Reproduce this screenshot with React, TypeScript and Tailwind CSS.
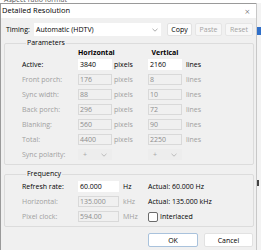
import React from 'react';

const paramRows = [
    { label: 'Active:', h: '3840', v: '2160', enabled: true },
    { label: 'Front porch:', h: '176', v: '8', enabled: false },
    { label: 'Sync width:', h: '88', v: '10', enabled: false },
    { label: 'Back porch:', h: '296', v: '72', enabled: false },
    { label: 'Blanking:', h: '560', v: '90', enabled: false },
    { label: 'Total:', h: '4400', v: '2250', enabled: false },
];

function Chevron({ className = '' }: { className?: string }) {
    return (
        <svg width="6" height="4" viewBox="0 0 6 4" className={className}>
            <path d="M0.5 0.8 L3 3.2 L5.5 0.8" fill="none" stroke="currentColor" strokeWidth="0.7" />
        </svg>
    );
}

function Field({ value, enabled, width }: { value: string; enabled: boolean; width: string }) {
    return (
        <div
            className={`${width} h-[11px] flex items-center pl-[1px] border ${
                enabled ? 'bg-white border-white text-black' : 'bg-[#f0f0f0] border-[#d9d9d9] text-[#8d8d8d]'
            }`}
        >
            {value}
        </div>
    );
}

function PolarityBox() {
    return (
        <div className="w-[34px] h-[11px] flex items-center justify-between px-[5px] bg-[#ededed] text-[#a8a8a8]">
            <span>+</span>
            <Chevron />
        </div>
    );
}

export default function App() {
    return (
        <div className="w-[261px] h-[250px] overflow-hidden bg-[#e4e4e4] flex flex-col font-['Open_Sans',sans-serif] text-[7px] leading-none text-black">
            {/* window behind the dialog */}
            <div className="h-[3px] shrink-0 flex items-end overflow-hidden bg-white text-[#555]">
                <span className="ml-[4px] leading-[6px]">Aspect ratio format</span>
            </div>

            <div className="flex flex-1 min-h-0">
                {/* Dialog */}
                <div className="w-[256px] shrink-0 flex flex-col bg-[#f0f0f0] border-l border-t border-[#9a9a9a]">
                    {/* Title bar */}
                    <div className="h-[14px] shrink-0 bg-white flex items-center justify-between pl-[1px] pr-[6px]">
                        <span className="text-[7.5px]">Detailed Resolution</span>
                        <span className="text-[9px] font-light text-[#333]">×</span>
                    </div>

                    <div className="flex flex-col px-[3px]">
                        {/* Timing row */}
                        <div className="mt-[5px] h-[13px] flex items-center pl-[2px]">
                            <span className="w-[28px]">Timing:</span>
                            <div className="w-[127px] h-[13px] bg-white flex items-center justify-between pl-[2px] pr-[3px]">
                                <span>Automatic (HDTV)</span>
                                <Chevron className="text-[#888]" />
                            </div>
                            <button className="ml-[6px] w-[25px] h-[13px] bg-[#fdfdfd] border border-[#e2e2e2] rounded-[2px] flex items-center justify-center">
                                Copy
                            </button>
                            <button className="ml-[3px] w-[27px] h-[13px] bg-[#f7f7f7] border border-[#e6e6e6] rounded-[2px] flex items-center justify-center text-[#a3a3a3]">
                                Paste
                            </button>
                            <button className="ml-[3px] w-[28px] h-[13px] bg-[#f7f7f7] border border-[#e6e6e6] rounded-[2px] flex items-center justify-center text-[#a3a3a3]">
                                Reset
                            </button>
                        </div>

                        {/* Parameters */}
                        <fieldset className="mt-[2px] border border-[#dcdcdc] rounded-[2px] pl-[17px] pb-[2px] w-[250px]">
                            <legend className="ml-[4px] px-[1px] h-[10px] leading-[10px]">Parameters</legend>
                            <div className="h-[9px] grid grid-cols-[56px_34px_36px_34px_auto] items-center font-bold">
                                <span />
                                <span className="text-center">Horizontal</span>
                                <span />
                                <span className="text-center">Vertical</span>
                            </div>
                            {paramRows.map(r => (
                                <div
                                    key={r.label}
                                    className={`h-[15px] grid grid-cols-[56px_34px_36px_34px_auto] items-center ${
                                        r.enabled ? 'text-black' : 'text-[#a0a0a0]'
                                    }`}
                                >
                                    <span>{r.label}</span>
                                    <Field value={r.h} enabled={r.enabled} width="w-[34px]" />
                                    <span className="pl-[2px]">pixels</span>
                                    <Field value={r.v} enabled={r.enabled} width="w-[34px]" />
                                    <span className="pl-[4px]">lines</span>
                                </div>
                            ))}
                            <div className="h-[15px] grid grid-cols-[56px_34px_36px_34px_auto] items-center text-[#a0a0a0]">
                                <span>Sync polarity:</span>
                                <PolarityBox />
                                <span />
                                <PolarityBox />
                            </div>
                        </fieldset>

                        {/* Frequency */}
                        <fieldset className="mt-[4px] border border-[#dcdcdc] rounded-[2px] pl-[17px] pb-[2px] w-[250px]">
                            <legend className="ml-[4px] px-[1px] h-[10px] leading-[10px]">Frequency</legend>
                            <div className="h-[15px] grid grid-cols-[56px_41px_29px_auto] items-center">
                                <span>Refresh rate:</span>
                                <Field value="60.000" enabled width="w-[41px]" />
                                <span className="pl-[4px]">Hz</span>
                                <span>Actual: 60.000 Hz</span>
                            </div>
                            <div className="h-[15px] grid grid-cols-[56px_41px_29px_auto] items-center text-[#a0a0a0]">
                                <span>Horizontal:</span>
                                <Field value="135.000" enabled={false} width="w-[41px]" />
                                <span className="pl-[4px]">kHz</span>
                                <span className="text-black">Actual: 135.000 kHz</span>
                            </div>
                            <div className="h-[15px] grid grid-cols-[56px_41px_29px_auto] items-center text-[#a0a0a0]">
                                <span>Pixel clock:</span>
                                <Field value="594.00" enabled={false} width="w-[41px]" />
                                <span className="pl-[4px]">MHz</span>
                                <label className="flex items-center text-black">
                                    <span className="w-[10px] h-[10px] border border-[#6b6b6b] rounded-[2px] bg-white" />
                                    <span className="ml-[2px]">Interlaced</span>
                                </label>
                            </div>
                        </fieldset>

                        {/* Buttons */}
                        <div className="mt-[6px] flex justify-end gap-[6px] pr-[0px]">
                            <button className="w-[50px] h-[14px] bg-white border border-[#a9c2dc] rounded-[2px] flex items-center justify-center">
                                OK
                            </button>
                            <button className="w-[49px] h-[14px] bg-white border border-[#e2e2e2] rounded-[2px] flex items-center justify-center">
                                Cancel
                            </button>
                        </div>
                    </div>
                </div>

                {/* window behind, right edge */}
                <div className="flex-1 flex flex-col bg-[#f3f3f3] border-l border-[#c8c8c8]">
                    <div className="mt-[24px] h-[8px] bg-[#2f6fc9]" />
                    <div className="mt-[145px] h-[6px] w-[2px] bg-[#444]" />
                </div>
            </div>
        </div>
    );
}
